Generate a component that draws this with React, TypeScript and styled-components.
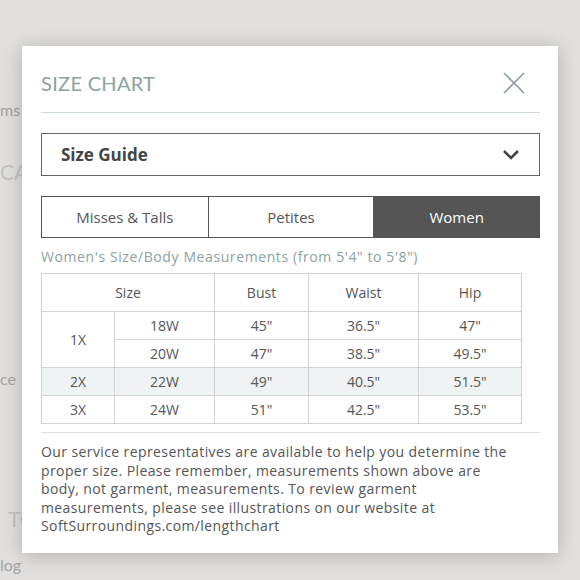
import styled, { createGlobalStyle } from 'styled-components'

const GlobalStyle = createGlobalStyle`
  html, body {
    margin: 0;
    padding: 0;
    background: #e1e0de;
  }
  body {
    font-family: 'Open Sans', 'Liberation Sans', sans-serif;
  }
`

interface CrumbProps {
  top: number
  size?: number
  shade?: string
  left?: number
}

const Page = styled.div`
  position: relative;
  width: 580px;
  height: 580px;
  overflow: hidden;
  background: #e1e0de;
`

const SideNav = styled.div`
  display: flex;
  flex-direction: column;
  font-family: 'Lato', sans-serif;
`

const Crumb = styled.div<CrumbProps>`
  white-space: nowrap;
  margin-top: ${(p) => p.top}px;
  padding-left: ${(p) => p.left ?? 0}px;
  font-size: ${(p) => p.size ?? 16}px;
  line-height: 20px;
  color: ${(p) => p.shade ?? '#a3a3a2'};
`

const Modal = styled.div`
  position: absolute;
  left: 22px;
  top: 46px;
  width: 536px;
  box-sizing: border-box;
  padding: 0 18px 17px 19px;
  background: #fff;
  box-shadow: 0 2px 18px rgba(0, 0, 0, 0.22);
  color: #555;
`

const Header = styled.div`
  display: flex;
  align-items: center;
  justify-content: space-between;
  padding: 22px 15px 14px 0;
  border-bottom: 1px solid #cfdada;
`

const Title = styled.h2`
  margin: 0;
  font-family: 'Lato', sans-serif;
  font-size: 20px;
  line-height: 30px;
  font-weight: 400;
  letter-spacing: 0.3px;
  color: #8ea1a2;
`

const CloseButton = styled.button`
  display: flex;
  padding: 0;
  border: none;
  background: none;
`

const Select = styled.div`
  display: flex;
  align-items: center;
  justify-content: space-between;
  margin-top: 20px;
  height: 43px;
  box-sizing: border-box;
  padding: 0 19px 0 19px;
  border: 1.5px solid #666;
  font-size: 17px;
  font-weight: 700;
  color: #444;
`

const Tabs = styled.div`
  display: grid;
  grid-template-columns: 1fr 1fr 1fr;
  margin-top: 20px;
  height: 42px;
  box-sizing: border-box;
  border: 1.5px solid #555;
`

const Tab = styled.div<{ active?: boolean }>`
  display: flex;
  align-items: center;
  justify-content: center;
  font-size: 15px;
  color: ${(p) => (p.active ? '#fff' : '#555')};
  background: ${(p) => (p.active ? '#555' : '#fff')};
  & + & {
    border-left: 1.5px solid #555;
  }
`

const Caption = styled.div`
  margin-top: 9px;
  font-size: 14px;
  line-height: 20px;
  letter-spacing: 0.6px;
  color: #8ea1a2;
`

const Table = styled.table`
  margin-top: 6px;
  width: 480px;
  border-collapse: collapse;
  table-layout: fixed;
  font-size: 14px;
  color: #555;

  th,
  td {
    border: 1px solid #d2d2d2;
    text-align: center;
    padding: 0;
    font-weight: 400;
  }
  th {
    height: 37px;
  }
  td {
    height: 27px;
  }
`

const Row = styled.tr<{ shaded?: boolean }>`
  background: ${(p) => (p.shaded ? '#eff3f3' : '#fff')};
`

const Rule = styled.hr`
  margin: 8px 0 0;
  border: none;
  border-top: 1.5px solid #dedede;
`

const Note = styled.p`
  margin: 10px 0 0;
  padding-right: 24px;
  font-size: 14px;
  line-height: 18.5px;
  letter-spacing: 0.4px;
  color: #555;
`

const rows = [
  { group: '1X', span: 2, size: '18W', bust: '45"', waist: '36.5"', hip: '47"' },
  { size: '20W', bust: '47"', waist: '38.5"', hip: '49.5"' },
  { group: '2X', span: 1, size: '22W', bust: '49"', waist: '40.5"', hip: '51.5"', shaded: true },
  { group: '3X', span: 1, size: '24W', bust: '51"', waist: '42.5"', hip: '53.5"' },
]

export default function App() {
  return (
    <Page>
      <GlobalStyle />
      <SideNav>
        <Crumb top={100}>ms</Crumb>
        <Crumb top={42} size={21} shade="#c3c3c2">CA</Crumb>
        <Crumb top={187}>ce</Crumb>
        <Crumb top={120} size={21} shade="#c3c3c2" left={8}>TO</Crumb>
        <Crumb top={26}>log</Crumb>
      </SideNav>

      <Modal>
        <Header>
          <Title>SIZE CHART</Title>
          <CloseButton aria-label="Close">
            <svg width="22" height="22" viewBox="0 0 22 22">
              <path d="M1 1 L21 21 M21 1 L1 21" stroke="#8ea1a2" strokeWidth="1.6" fill="none" />
            </svg>
          </CloseButton>
        </Header>

        <Select>
          <span>Size Guide</span>
          <svg width="18" height="11" viewBox="0 0 18 11">
            <path d="M2 2 L9 9 L16 2" stroke="#444" strokeWidth="2.6" fill="none" />
          </svg>
        </Select>

        <Tabs>
          <Tab>Misses &amp; Talls</Tab>
          <Tab>Petites</Tab>
          <Tab active>Women</Tab>
        </Tabs>

        <Caption>Women's Size/Body Measurements (from 5'4" to 5'8")</Caption>

        <Table>
          <colgroup>
            <col style={{ width: 73 }} />
            <col style={{ width: 100 }} />
            <col style={{ width: 94 }} />
            <col style={{ width: 110 }} />
            <col style={{ width: 103 }} />
          </colgroup>
          <thead>
            <tr>
              <th colSpan={2}>Size</th>
              <th>Bust</th>
              <th>Waist</th>
              <th>Hip</th>
            </tr>
          </thead>
          <tbody>
            {rows.map((r) => (
              <Row key={r.size} shaded={r.shaded}>
                {r.group && <td rowSpan={r.span}>{r.group}</td>}
                <td>{r.size}</td>
                <td>{r.bust}</td>
                <td>{r.waist}</td>
                <td>{r.hip}</td>
              </Row>
            ))}
          </tbody>
        </Table>

        <Rule />

        <Note>
          Our service representatives are available to help you determine the proper size. Please
          remember, measurements shown above are body, not garment, measurements. To review garment
          measurements, please see illustrations on our website at SoftSurroundings.com/lengthchart
        </Note>
      </Modal>
    </Page>
  )
}
